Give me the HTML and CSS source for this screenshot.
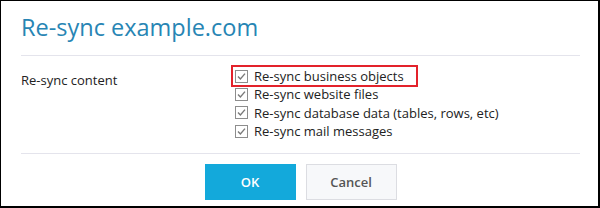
FILE: index.html
```html
<!DOCTYPE html>
<html lang="en">
<head>
    <meta charset="UTF-8">
    <title>Re-sync example.com</title>
    <link rel="stylesheet" href="styles.css">
</head>
<body>
    <div class="dialog">
        <h1 class="dialog-title">Re-sync example.com</h1>
        <div class="dialog-body">
            <div class="field-label">Re-sync content</div>
            <div class="options">
                <label class="option highlighted">
                    <span class="check"><svg width="13" height="13" viewBox="0 0 13 13"><rect x="0.5" y="0.5" width="12" height="12" fill="#fff" stroke="#8d8d8d"/><path d="M3 6.5 L5.4 9 L10 3.6" fill="none" stroke="#7a7a7a" stroke-width="1.4"/></svg></span>
                    Re-sync business objects
                </label>
                <label class="option">
                    <span class="check"><svg width="13" height="13" viewBox="0 0 13 13"><rect x="0.5" y="0.5" width="12" height="12" fill="#fff" stroke="#8d8d8d"/><path d="M3 6.5 L5.4 9 L10 3.6" fill="none" stroke="#7a7a7a" stroke-width="1.4"/></svg></span>
                    Re-sync website files
                </label>
                <label class="option">
                    <span class="check"><svg width="13" height="13" viewBox="0 0 13 13"><rect x="0.5" y="0.5" width="12" height="12" fill="#fff" stroke="#8d8d8d"/><path d="M3 6.5 L5.4 9 L10 3.6" fill="none" stroke="#7a7a7a" stroke-width="1.4"/></svg></span>
                    Re-sync database data (tables, rows, etc)
                </label>
                <label class="option">
                    <span class="check"><svg width="13" height="13" viewBox="0 0 13 13"><rect x="0.5" y="0.5" width="12" height="12" fill="#fff" stroke="#8d8d8d"/><path d="M3 6.5 L5.4 9 L10 3.6" fill="none" stroke="#7a7a7a" stroke-width="1.4"/></svg></span>
                    Re-sync mail messages
                </label>
            </div>
        </div>
        <div class="dialog-footer">
            <button class="btn btn-primary">OK</button>
            <button class="btn btn-default">Cancel</button>
        </div>
    </div>
</body>
</html>
```

FILE: styles.css
```css
body {
    margin: 0;
    background: #fff;
    font-family: "Open Sans", Arial, sans-serif;
    color: #222;
}

.dialog {
    box-sizing: border-box;
    width: 600px;
    height: 208px;
    border: 1px solid #000;
    border-right-width: 2px;
    border-bottom-width: 2px;
    padding: 0 18px 0 20px;
}

.dialog-title {
    margin: 0;
    padding: 11px 0 13px;
    font-size: 23.5px;
    font-weight: normal;
    line-height: 30px;
    color: #2785b4;
    border-bottom: 1px solid #e4e4ec;
}

.dialog-body {
    display: grid;
    grid-template-columns: 214px 1fr;
    padding: 11px 0 13px;
    border-bottom: 1px solid #e4e4ec;
    font-size: 13px;
}

.field-label {
    padding-top: 4px;
    line-height: 18px;
}

.options {
    display: flex;
    flex-direction: column;
}

.option {
    display: flex;
    align-items: center;
    gap: 6px;
    height: 18.3px;
    line-height: 18px;
}

.option.highlighted {
    align-self: flex-start;
    margin-left: -4px;
    padding: 0 12px 0 2px;
    border: 2px solid #e3222b;
    margin-top: -2px;
    margin-bottom: -2px;
}

.check {
    display: flex;
}

.dialog-footer {
    display: flex;
    justify-content: center;
    gap: 10px;
    padding-top: 10px;
}

.btn {
    width: 91px;
    height: 36px;
    font-family: inherit;
    font-size: 13px;
    font-weight: 600;
    border-radius: 0;
    cursor: pointer;
}

.btn-primary {
    background: #13a9db;
    border: none;
    color: #fff;
}

.btn-default {
    background: #f7f8fa;
    border: 1px solid #dcdde2;
    color: #555;
}
```
